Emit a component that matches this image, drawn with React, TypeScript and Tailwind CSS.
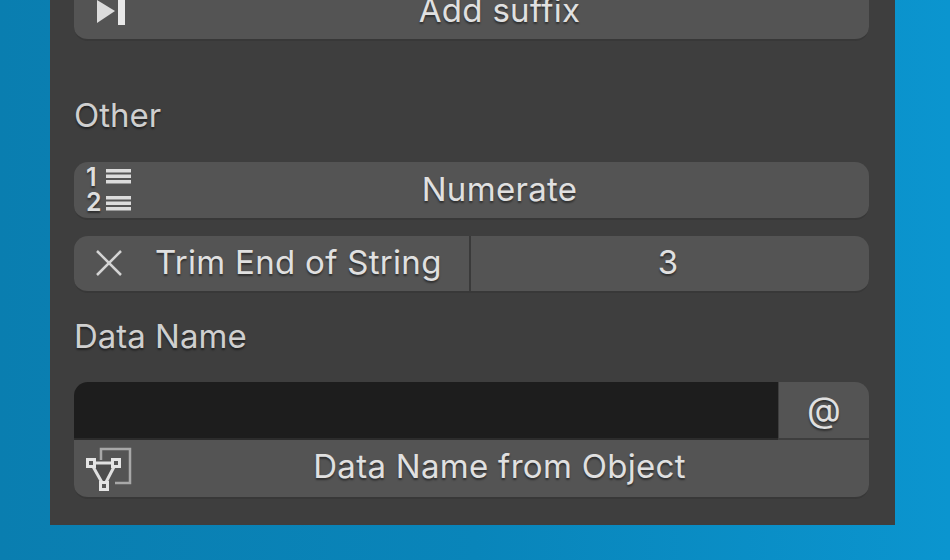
const font = { fontFamily: 'Inter, "Noto Sans", sans-serif' }

function SuffixIcon() {
  return (
    <svg width="32" height="28" viewBox="0 0 32 28" className="absolute left-[21px] top-[17px]">
      <path d="M2 0 L20 11 L2 23 Z" fill="#dcdcdc" />
      <rect x="23" y="0" width="7" height="25" fill="#e8e8e8" />
    </svg>
  )
}

function NumerateIcon() {
  return (
    <>
      <div className="absolute left-[12px] top-[3px] flex flex-col text-[25px] leading-[25px] font-semibold tracking-normal text-[#dedede]">
        <span>1</span>
        <span>2</span>
      </div>
      <svg width="26" height="48" viewBox="0 0 26 48" className="absolute left-[32px] top-[4px]">
        <path d="M0 3h25v3.500H0zM0 8.500h25v3.500H0zM0 14h25v3.500H0zM0 30h25v3.500H0zM0 35.500h25v3.500H0zM0 41h25v3.500H0z" fill="#dcdcdc" />
      </svg>
    </>
  )
}

function MeshDataIcon() {
  return (
    <svg width="48" height="48" viewBox="0 0 48 48" className="absolute left-[12px] top-[6px]">
      <path d="M15 14V3h29v34H29" fill="none" stroke="#a8a8a8" strokeWidth="2.500" />
      <path d="M5 17H30L18 40Z" fill="#4c4c4c" stroke="#e0e0e0" strokeWidth="3" />
      <rect x="1.500" y="13.500" width="7" height="7" fill="#565656" stroke="#e4e4e4" strokeWidth="3" />
      <rect x="26.500" y="13.500" width="7" height="7" fill="#565656" stroke="#e4e4e4" strokeWidth="3" />
      <rect x="14.500" y="36.500" width="7" height="7" fill="#565656" stroke="#e4e4e4" strokeWidth="3" />
    </svg>
  )
}

function Label({ children, className }: { children: string; className: string }) {
  return <div className={`text-[33px] leading-[40px] text-[#cfcfcf] [text-shadow:0_2px_2px_rgba(0,0,0,0.45)] ${className}`}>{children}</div>
}

const button = 'relative rounded-[14px] bg-[#545454] border-b-2 border-[#383838] flex items-center justify-center pl-[56px] text-[33px] tracking-[0.3px] text-[#e0e0e0] [text-shadow:0_2px_2px_rgba(0,0,0,0.45)]'

export default function App() {
  return (
    <div
      className="w-[950px] h-[560px] overflow-hidden bg-gradient-to-r from-[#0a7eb0] via-[#0985ba] to-[#0b95cf] pl-[50px]"
      style={font}
    >
      <div className="w-[845px] h-[525px] bg-[#3e3e3e] pl-[24px] pr-[26px] overflow-hidden">
        {/* Add suffix, cut off by the top edge */}
        <div className={`${button} -mt-[17px] h-[58px]`}>
          <SuffixIcon />
          Add suffix
        </div>

        <Label className="mt-[54px]">Other</Label>

        <div className={`${button} mt-[27px] h-[58px]`}>
          <NumerateIcon />
          Numerate
        </div>

        <div className="mt-[16px] h-[57px] rounded-[14px] bg-[#545454] border-b-2 border-[#383838] flex text-[33px] tracking-[0.3px] text-[#e0e0e0] [text-shadow:0_2px_2px_rgba(0,0,0,0.45)]">
          <div className="w-[397px] pb-[1px] flex items-center border-r-2 border-[#3a3a3a]">
            <svg width="28" height="28" viewBox="0 0 28 28" className="ml-[21px] mr-[32px]">
              <path d="M2 2 L26 26 M26 2 L2 26" stroke="#d4d4d4" strokeWidth="2.500" />
            </svg>
            Trim End of String
          </div>
          <div className="flex-1 pb-[1px] flex items-center justify-center pr-[4px]">3</div>
        </div>

        <Label className="mt-[23px]">Data Name</Label>

        <div className="mt-[26px] h-[58px] flex text-[#e0e0e0]">
          <div className="w-[704px] bg-[#1d1d1d] rounded-tl-[14px] border-b-2 border-[#2c2c2c]" />
          <div className="flex-1 ml-[1px] pb-[1px] bg-[#545454] rounded-tr-[14px] border-b-2 border-[#3e3e3e] flex items-center justify-center text-[35px] [text-shadow:0_2px_2px_rgba(0,0,0,0.45)]">@</div>
        </div>
        <div className={`${button} rounded-t-none h-[59px] pb-[3px]`}>
          <MeshDataIcon />
          Data Name from Object
        </div>
      </div>
    </div>
  )
}
